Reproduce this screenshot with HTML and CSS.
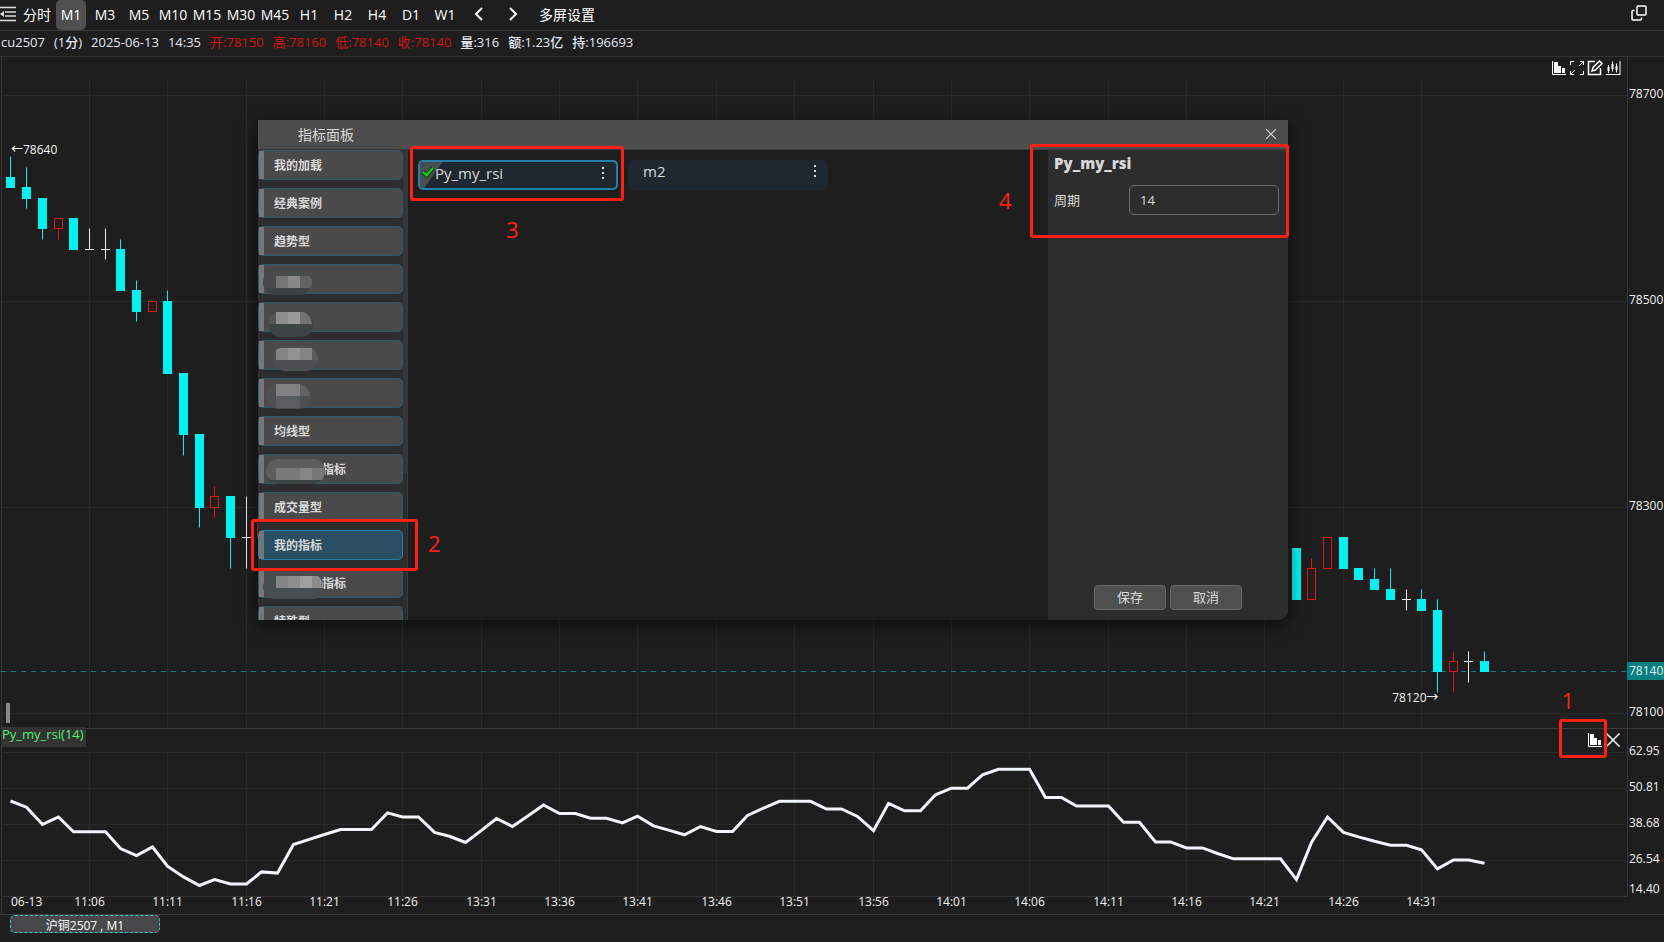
FILE: index.html
```
<!DOCTYPE html>
<html lang="zh-CN">
<head>
	<title>cu2507 M1</title>
	<meta charset="utf-8">
	<link rel="stylesheet" href="styles.css">
</head>
<body>
	<!-- 公用图标 -->
	<svg class="defs" width="0" height="0">
		<symbol id="icon-bars" viewBox="0 0 16 16">
			<path d="M1.500 1V14.500H15" fill="none" stroke="currentColor"/>
			<path d="M3 2h4v11H3zM7 6h3v7H7zM11 8h3v5h-3z" fill="currentColor"/>
		</symbol>
		<symbol id="icon-close" viewBox="0 0 16 16">
			<path d="M1.500 1.500l13 13M14.500 1.500l-13 13" fill="none" stroke="currentColor" stroke-width="1.500"/>
		</symbol>
		<symbol id="icon-dots" viewBox="0 0 4 12">
			<path d="M1 0h2v2h-2zM1 5h2v2h-2zM1 10h2v2h-2z" fill="currentColor"/>
		</symbol>
	</svg>

	<nav class="toolbar">
		<button class="menuBtn" type="button" aria-label="菜单">
			<svg width="16" height="16" viewBox="0 0 16 16"><path d="M0 1.500h16M5 6h11M5 10h11M0 14.500h16" stroke="#ddd" stroke-width="1.500"/><path d="M4 5v6L0 8z" fill="#ddd"/></svg>
		</button>
		<button type="button">分时</button>
		<button class="active" type="button">M1</button>
		<button type="button">M3</button>
		<button type="button">M5</button>
		<button type="button">M10</button>
		<button type="button">M15</button>
		<button type="button">M30</button>
		<button type="button">M45</button>
		<button type="button">H1</button>
		<button type="button">H2</button>
		<button type="button">H4</button>
		<button type="button">D1</button>
		<button type="button">W1</button>
		<button type="button" aria-label="上一个"><svg width="10" height="16" viewBox="0 0 10 16"><path d="M8 2L2 8l6 6" fill="none" stroke="#fff" stroke-width="2"/></svg></button>
		<button type="button" aria-label="下一个"><svg width="10" height="16" viewBox="0 0 10 16"><path d="M2 2l6 6-6 6" fill="none" stroke="#fff" stroke-width="2"/></svg></button>
		<button class="screenBtn" type="button">多屏设置</button>
		<button class="copyBtn" type="button" aria-label="还原">
			<svg width="16" height="16" viewBox="0 0 16 16" fill="none" stroke="#fff" stroke-width="1.500"><rect x="6" y="1" width="9" height="9" rx="1"/><path d="M3.500 5.500H2a1 1 0 0 0-1 1V14a1 1 0 0 0 1 1h7.500a1 1 0 0 0 1-1v-1.500"/></svg>
		</button>
	</nav>

	<div class="quote">
		<span>cu2507</span><span>(1分)</span><span>2025-06-13</span><span>14:35</span>
		<span class="up">开:78150</span><span class="up">高:78160</span><span class="up">低:78140</span><span class="up">收:78140</span>
		<span>量:316</span><span>额:1.23亿</span><span>持:196693</span>
	</div>

	<main class="charts">
		<section class="pane pricePane">
			<svg id="priceChart"></svg>
			<div class="tools">
				<button type="button" aria-label="指标"><svg width="16" height="16"><use href="#icon-bars"/></svg></button>
				<button type="button" aria-label="全屏"><svg width="16" height="16" viewBox="0 0 16 16" fill="none" stroke="#fff"><path d="M1.500 5V1.500H5M11 1.500h3.500V5M14.500 11v3.500H11M5 14.500H1.500V11M14 2l-4 4M2 14l4-4"/></svg></button>
				<button type="button" aria-label="画线"><svg width="16" height="16" viewBox="0 0 16 16" fill="none" stroke="#fff" stroke-width="1.500"><path d="M8 1.500H1.500v13h12V8"/><path d="M5 11l1-3.500L12.500 1 15 3.500 8.500 10z"/></svg></button>
				<button type="button" aria-label="K线"><svg width="16" height="16" viewBox="0 0 16 16" fill="#fff" stroke="#fff"><path d="M3.500 5v8M7.500 1.500v10M11.500 3.500v9M15 1v14M1 14.500h14" fill="none"/><path d="M3 7h1v4h-1zM7 4h1v5h-1zM11 6h1v4h-1z"/></svg></button>
			</div>
			<i class="handle"></i>
		</section>
		<section class="pane rsiPane">
			<svg id="rsiChart"></svg>
			<span class="rsiName">Py_my_rsi(14)</span>
			<div class="tools">
				<button type="button" aria-label="指标"><svg width="16" height="16"><use href="#icon-bars"/></svg></button>
				<button type="button" aria-label="关闭"><svg width="16" height="16"><use href="#icon-close"/></svg></button>
			</div>
		</section>
	</main>

	<footer class="tabs">
		<button type="button">沪铜2507 , M1</button>
	</footer>

	<section class="dialog" role="dialog" aria-labelledby="dialogTitle">
		<header>
			<span id="dialogTitle">指标面板</span>
			<button type="button" aria-label="关闭"><svg width="12" height="12" viewBox="0 0 16 16"><use href="#icon-close"/></svg></button>
		</header>
		<div class="dialogBody">
			<div class="kinds">
				<ul>
					<li><button type="button">我的加载</button></li>
					<li><button type="button">经典案例</button></li>
					<li><button type="button">趋势型</button></li>
					<li><button type="button" aria-label="分类">
						<svg class="mask" width="70" height="34"><rect x="5" y="6" width="49" height="25" rx="12" fill="#484b4c"/><path d="M5 18h49a12 12 0 0 1-12 12H17a12 12 0 0 1-12-12z" fill="#484b4c"/><path d="M7 24h45q-4 7-11 7H17q-7 0-10-7z" fill="#3c4144"/><path d="M18 12h12v12H18z" fill="#757575"/><path d="M30 12h12v12H30z" fill="#888"/><path d="M42 12h10q4 6 1 12H42z" fill="#626262"/></svg>
					</button></li>
					<li><button type="button" aria-label="分类">
						<svg class="mask" width="70" height="36"><rect x="11" y="10" width="44" height="25" rx="12" fill="#3f4445"/><path d="M11 22q0-10 9-12h24q10 2 10 12z" fill="#555"/><path d="M18 10h12v12H18z" fill="#8d8d8d"/><path d="M30 10h12v12H30z" fill="#999"/><path d="M42 10h4q7 4 8 12H42z" fill="#727272"/></svg>
					</button></li>
					<li><button type="button" aria-label="分类">
						<svg class="mask" width="70" height="34"><rect x="15" y="6" width="45" height="25" rx="12" fill="#4c5051"/><path d="M18 10l4-2h32v12H18z" fill="#848484"/><path d="M30 8h12v12H30z" fill="#929292"/><path d="M54 8q6 4 6 12h-6z" fill="#5b5b5b"/></svg>
					</button></li>
					<li><button type="button" aria-label="分类">
						<svg class="mask" width="70" height="34"><rect x="9" y="5" width="44" height="26" rx="12" fill="#4c4f50"/><path d="M18 6h24v12H18z" fill="#818181"/><path d="M42 6q9 3 10 12H42z" fill="#626262"/><path d="M18 18h24v12H18z" fill="#5a5e60"/></svg>
					</button></li>
					<li><button type="button">均线型</button></li>
					<li><button class="tail" type="button">指标
						<svg class="mask" width="70" height="34"><rect x="8" y="5" width="59" height="25" rx="12" fill="#3e4243"/><path d="M8 18q0-12 12-13h36q11 1 11 13l-3 8H12q-4-4-4-8z" fill="#5d5d5d"/><path d="M18 14h24v12H18z" fill="#7a7a7a"/><path d="M42 14h12v12H42z" fill="#868686"/><path d="M54 14h12q2 6-2 12H54z" fill="#777"/></svg>
					</button></li>
					<li><button type="button">成交量型</button></li>
					<li><button class="active" type="button">我的指标</button></li>
					<li><button class="tail" type="button">指标
						<svg class="mask" width="70" height="34"><rect x="5" y="7" width="61" height="24" rx="12" fill="#484d4f"/><path d="M18 8h12v12H18z" fill="#858585"/><path d="M30 8h12v12H30z" fill="#8e8e8e"/><path d="M42 8h12v12H42z" fill="#a0a0a0"/><path d="M54 8h6q5 4 6 12H54z" fill="#8b8b8b"/></svg>
					</button></li>
					<li><button type="button">特殊型</button></li>
				</ul>
				<i class="scrollThumb"></i>
			</div>
			<div class="cards">
				<div class="card checked">
					<svg class="tick" width="14" height="12" viewBox="0 0 14 12"><path d="M2 6l3.500 3.500L12 2" fill="none" stroke="#063d06" stroke-width="4"/><path d="M2 6l3.500 3.500L12 2" fill="none" stroke="#16d016" stroke-width="2"/></svg>
					<span>Py_my_rsi</span>
					<button type="button" aria-label="更多"><svg width="4" height="12"><use href="#icon-dots"/></svg></button>
				</div>
				<div class="card">
					<span>m2</span>
					<button type="button" aria-label="更多"><svg width="4" height="12"><use href="#icon-dots"/></svg></button>
				</div>
			</div>
			<form class="params">
				<h2>Py_my_rsi</h2>
				<div class="field">
					<label for="period">周期</label>
					<input type="text" id="period" name="period" value="14">
				</div>
				<div class="actions">
					<button type="button">保存</button>
					<button type="button">取消</button>
				</div>
			</form>
		</div>
	</section>

	<!-- 操作步骤标注 -->
	<div class="mark mark1"></div><b class="num num1">1</b>
	<div class="mark mark2"></div><b class="num num2">2</b>
	<div class="mark mark3"></div><b class="num num3">3</b>
	<div class="mark mark4"></div><b class="num num4">4</b>

	<script src="chart.js"></script>
</body>
</html>
```
FILE: styles.css
```
*{
	padding: 0;
	margin: 0;
	box-sizing: border-box;
}
body{
	display: flex;
	flex-direction: column;
	position: relative;
	height: 100vh;
	overflow: hidden;
	background: #1e1e1e;
	color: #fff;
	font-family: "Open Sans", "Noto Sans CJK SC", sans-serif;
	font-size: 13px;
}
button{
	border: 0;
	background: none;
	color: inherit;
	font: inherit;
	white-space: nowrap;
}
svg{
	display: block;
}
.defs{
	position: absolute;
}

/* 顶部周期栏 */
.toolbar{
	display: flex;
	height: 31px;
	flex: none;
	border-bottom: 1px solid #3c3c3c;
	font-size: 14px;
}
.toolbar button{
	display: flex;
	width: 34px;
	height: 30px;
	align-items: center;
	justify-content: center;
	padding-bottom: 2px;
}
.toolbar .menuBtn{
	width: 20px;
	justify-content: flex-start;
}
.toolbar .active{
	width: 30px;
	margin: 0 2px;
	border-radius: 5px;
	background: #505050;
}
.toolbar .screenBtn{
	width: auto;
	margin-left: 9px;
}
.toolbar .copyBtn{
	width: 16px;
	height: 28px;
	margin: 0 17px 0 auto;
}

/* 行情信息 */
.quote{
	display: flex;
	height: 26px;
	flex: none;
	gap: 9px;
	padding-left: 1px;
	border-bottom: 1px solid #333;
	color: #e4e6f4;
	font-weight: 500;
	line-height: 22px;
	white-space: nowrap;
}
.quote .up{
	color: #d01414;
	font-weight: normal;
}

/* 图表 */
.charts{
	display: flex;
	flex: 1;
	flex-direction: column;
	min-height: 0;
}
.pane{
	position: relative;
	min-height: 0;
	border-bottom: 1px solid #3c3c3c;
}
.pane > svg{
	width: 100%;
	height: 100%;
}
.pane text{
	fill: #f2f2f2;
	font-size: 12px;
	font-weight: 500;
}
.pricePane{
	flex: 1;
}
.rsiPane{
	height: 186px;
	flex: none;
}
.tools{
	display: flex;
	position: absolute;
	top: 3px;
	right: 43px;
	gap: 2px;
}
.grid{
	stroke: #292929;
}
.frame{
	stroke: #333;
}
.down{
	fill: #00f2f2;
	stroke: #00f2f2;
}
.rise{
	fill: none;
	stroke: #e01414;
}
.flat{
	fill: none;
	stroke: #f0f0f0;
}
.nowLine{
	stroke: #0d8383;
	stroke-dasharray: 5 5;
}
.nowTag{
	fill: #008080;
}
.rsiLine{
	fill: none;
	stroke: #f2f5ff;
	stroke-width: 3;
}
.handle{
	position: absolute;
	bottom: 5px;
	left: 6px;
	width: 4px;
	height: 20px;
	background: #888;
}
.rsiName{
	position: absolute;
	top: -2px;
	left: 2px;
	height: 20px;
	padding-right: 2px;
	background: #333;
	color: #50f070;
	font-weight: 500;
	line-height: 15px;
}

/* 底部标签 */
.tabs{
	height: 27px;
	flex: none;
	padding-left: 10px;
}
.tabs button{
	display: block;
	width: 150px;
	height: 18px;
	border: 1px dashed #3cc8c8;
	border-radius: 5px;
	background: #46484a;
	font-size: 12px;
	line-height: 19px;
}

/* 指标面板 */
.dialog{
	display: flex;
	position: absolute;
	top: 120px;
	left: 258px;
	width: 1030px;
	height: 500px;
	flex-direction: column;
	overflow: hidden;
	border-radius: 0 0 10px 0;
	background: #1e1e1e;
	box-shadow: 0 4px 18px rgba(0,0,0,.6);
	color: #d8d8d8;
}
.dialog header{
	display: flex;
	height: 30px;
	flex: none;
	align-items: center;
	justify-content: space-between;
	padding: 0 11px 1px 40px;
	border-bottom: 1px solid #3a3a3a;
	background: #4d4d4d;
	font-size: 14px;
}
.dialogBody{
	display: flex;
	flex: 1;
	min-height: 0;
}
.kinds{
	position: relative;
	width: 150px;
	overflow: hidden;
	border-right: 1px solid #3a3a3e;
	background: #2d2d2d;
}
.kinds ul{
	display: flex;
	width: 145px;
	flex-direction: column;
	gap: 8px;
	list-style: none;
}
.kinds button{
	display: block;
	position: relative;
	width: 145px;
	height: 30px;
	padding-left: 15px;
	border: 1px solid #2b5b6b;
	border-radius: 5px;
	background: #4a4a4a;
	font-size: 12px;
	font-weight: bold;
	line-height: 30px;
	text-align: left;
}
.kinds button::before{
	content: "";
	position: absolute;
	top: 0;
	bottom: 0;
	left: 0;
	width: 5px;
	background: #777;
}
.kinds .active{
	border-color: #2281ab;
	background: #2b4f62;
}
.kinds .tail{
	padding-left: 63px;
}
.mask{
	position: absolute;
	top: -1px;
	left: -1px;
}
.scrollThumb{
	position: absolute;
	top: 0;
	right: 0;
	width: 4px;
	height: 323px;
	background: #35353a;
}
.cards{
	display: flex;
	flex: 1;
	align-items: flex-start;
	gap: 10px;
	padding: 10px;
}
.card{
	display: flex;
	position: relative;
	width: 200px;
	height: 30px;
	justify-content: space-between;
	padding: 0 11px 0 15px;
	border-radius: 5px;
	background: #1f2830;
	font-size: 15px;
	line-height: 22px;
}
.card button{
	height: 22px;
}
.card.checked{
	border: 2px solid #2281ab;
	background: linear-gradient(125deg, #484d52 18px, #1f2830 19px);
}
.tick{
	position: absolute;
	top: 4px;
	left: 1px;
}
.params{
	display: flex;
	width: 240px;
	flex-direction: column;
	padding: 0 9px 10px 6px;
	background: #2d2d2d;
}
.params h2{
	height: 35px;
	font-size: 15px;
	font-weight: 800;
	line-height: 27px;
}
.field{
	display: flex;
	align-items: center;
	justify-content: space-between;
}
.field label{
	padding-bottom: 2px;
}
.field input{
	width: 150px;
	height: 30px;
	padding-left: 10px;
	border: 1px solid #707070;
	border-radius: 5px;
	background: none;
	color: #d8d8d8;
	font: inherit;
}
.actions{
	display: flex;
	gap: 4px;
	margin: auto 0 0 40px;
}
.actions button{
	width: 72px;
	height: 25px;
	padding-bottom: 2px;
	border: 1px solid #686868;
	border-radius: 4px;
	background: #505050;
}

/* 红色标注框 */
.mark{
	position: absolute;
	border: 3px solid #ff2012;
	border-radius: 3px;
	pointer-events: none;
}
.mark1{
	top: 719px;
	right: 57px;
	width: 48px;
	height: 39px;
}
.mark2{
	top: 519px;
	left: 251px;
	width: 167px;
	height: 52px;
}
.mark3{
	top: 146px;
	left: 410px;
	width: 214px;
	height: 55px;
}
.mark4{
	top: 144px;
	left: 1030px;
	width: 259px;
	height: 94px;
}
.num{
	position: absolute;
	color: #ff2012;
	font-size: 22px;
	font-weight: normal;
	line-height: 30px;
}
.num1{
	top: 685px;
	right: 90px;
}
.num2{
	top: 528px;
	left: 428px;
}
.num3{
	top: 214px;
	left: 506px;
}
.num4{
	top: 185px;
	left: 999px;
}
```
FILE: chart.js
```
var AXIS_W = 37;
var VISIBLE = 103.8;
var FIRST_X = 11;

//[序号, 开, 高, 低, 收]
var candles = [
	[0,78620,78640,78610,78610],[1,78610,78630,78590,78600],[2,78600,78600,78560,78570],
	[3,78570,78580,78560,78580],[4,78580,78580,78550,78550],[5,78550,78570,78550,78550],
	[6,78550,78570,78540,78550],[7,78550,78560,78510,78510],[8,78510,78520,78480,78490],
	[9,78490,78500,78490,78500],[10,78500,78510,78430,78430],[11,78430,78430,78350,78370],
	[12,78370,78370,78280,78300],[13,78300,78320,78290,78310],[14,78310,78310,78240,78270],
	[15,78270,78310,78240,78270],[16,78270,78290,78270,78290],
	[82,78260,78260,78210,78210],[83,78210,78250,78210,78240],[84,78240,78270,78240,78270],
	[85,78270,78270,78240,78240],[86,78240,78240,78230,78230],[87,78230,78240,78220,78220],
	[88,78220,78240,78210,78210],[89,78210,78220,78200,78210],[90,78210,78220,78200,78200],
	[91,78200,78210,78120,78140],[92,78140,78160,78120,78150],[93,78150,78160,78130,78150],
	[94,78150,78160,78140,78140]
];
var rsi = [
	46.6,44.5,38.7,41.2,36.2,36.2,36.2,30.6,28.2,31.1,24.6,21.0,18.1,20.1,18.6,18.6,22.7,22.3,31.9,33.6,
	35.3,37.0,37.0,37.0,42.6,41.2,41.2,36.0,34.7,32.6,36.7,40.7,38.0,41.7,45.3,42.4,42.4,40.8,40.8,39.2,
	41.5,38.2,36.7,35.2,38.0,36.3,36.3,41.7,44.2,46.5,46.5,46.5,43.9,43.9,41.4,36.6,45.8,43.3,43.3,48.7,
	50.9,50.9,55.4,57.3,57.3,57.3,47.8,47.8,44.9,44.9,44.9,39.4,39.4,32.8,32.8,30.8,30.8,28.9,27.1,27.1,
	27.1,27.1,20.1,32.6,41.2,36.0,34.5,33.0,31.7,31.7,30.1,23.7,26.7,26.7,25.6
];
var times = ["11:06","11:11","11:16","11:21","11:26","13:31","13:36","13:41","13:46","13:51","13:56","14:01","14:06","14:11","14:16","14:21","14:26","14:31"];

function line(cls, x1, y1, x2, y2) {
	return '<path class="' + cls + '" d="M' + x1 + ' ' + y1 + 'L' + x2 + ' ' + y2 + '"/>';
}
function text(x, y, str, anchor) {
	return '<text x="' + x + '" y="' + y + '" text-anchor="' + (anchor || "start") + '">' + str + '</text>';
}
function barX(i, plotW) {
	return Math.floor(FIRST_X + i * plotW / VISIBLE) + 0.5 - (i ? 0 : 1);
}
function drawPrice() {
	var svg = document.getElementById("priceChart");
	var w = svg.clientWidth;
	var h = svg.clientHeight;
	var plotW = w - AXIS_W;
	var out = "";
	function priceY(p) {
		return Math.floor(38 + (78700 - p) * (h - 53) / 600) + 0.5;
	}
	times.forEach(function (t, n) {
		var x = barX(5 + n * 5, plotW);
		out += line("grid", x, 23, x, h);
	});
	[78700, 78500, 78300, 78100].forEach(function (p) {
		out += line("grid", 1, priceY(p), plotW, priceY(p));
		out += text(plotW + 2, priceY(p) + 2.5, p);
	});
	out += line("frame", plotW + 0.5, 0, plotW + 0.5, h) + line("frame", 1.5, 0, 1.5, h);
	out += line("nowLine", 1, priceY(78140), plotW, priceY(78140));
	candles.forEach(function (c) {
		var x = barX(c[0], plotW);
		var top = priceY(Math.max(c[1], c[4]));
		var bottom = priceY(Math.min(c[1], c[4]));
		var cls = c[4] > c[1] ? "rise" : c[4] < c[1] ? "down" : "flat";
		out += line(cls, x, priceY(c[2]), x, top) + line(cls, x, bottom, x, priceY(c[3]));
		if (cls === "flat") {
			out += line(cls, x - 4.5, top, x + 4.5, top);
		} else {
			out += '<rect class="' + cls + '" x="' + (x - 4) + '" y="' + top + '" width="8" height="' + (bottom - top) + '"/>';
		}
	});
	out += text(11, priceY(78640) - 2.5, "←78640");
	out += text(barX(91, plotW) + 1, priceY(78120) + 9.5, "78120→", "end");
	out += '<rect class="nowTag" x="' + plotW + '" y="' + (priceY(78140) - 9.5) + '" width="' + AXIS_W + '" height="18"/>';
	out += text(plotW + 2, priceY(78140) + 3.5, 78140);
	svg.innerHTML = out;
}
function drawRsi() {
	var svg = document.getElementById("rsiChart");
	var w = svg.clientWidth;
	var plotW = w - AXIS_W;
	var out = "";
	var points = [];
	function rsiY(v) {
		return 23.5 + (62.95 - v) * 144 / 48.55;
	}
	times.forEach(function (t, n) {
		var x = barX(5 + n * 5, plotW);
		out += line("grid", x, 23, x, 167) + text(x, 177, t, "middle");
	});
	out += text(11, 177, "06-13");
	["62.95", "50.81", "38.68", "26.54", "14.40"].forEach(function (v, n) {
		var y = 23.5 + n * 36;
		out += line(n === 4 ? "frame" : "grid", 1, y, plotW, y);
		out += text(plotW + 2, n === 4 ? 164 : y + 2.5, v);
	});
	out += line("frame", plotW + 0.5, 0, plotW + 0.5, 167) + line("frame", 1.5, 0, 1.5, 185);
	rsi.forEach(function (v, i) {
		points.push(barX(i, plotW) + "," + rsiY(v).toFixed(1));
	});
	out += '<polyline class="rsiLine" points="' + points.join(" ") + '"/>';
	svg.innerHTML = out;
}
function draw() {
	drawPrice();
	drawRsi();
}
window.addEventListener("resize", draw);
draw();
```
